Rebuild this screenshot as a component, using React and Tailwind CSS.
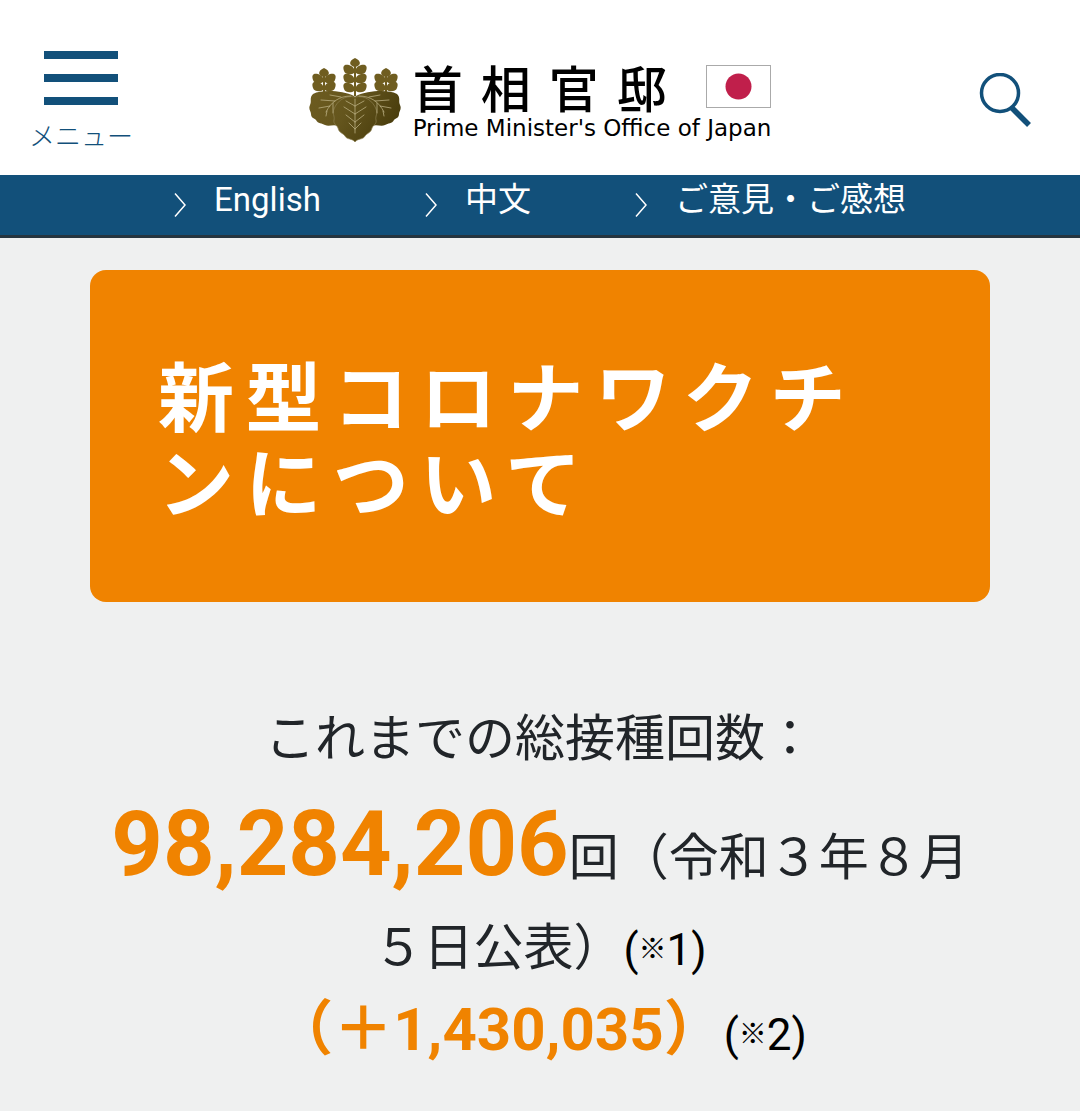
import React from "react";

const navLinks = [
  { label: "English", href: "#english" },
  { label: "中文", href: "#chinese" },
  { label: "ご意見・ご感想", href: "#opinion" },
];

// One stalk of blossoms, drawn upwards from (x, y)
const Stalk = ({ x, y, rows, step }) => (
  <g transform={`translate(${x} ${y})`}>
    {Array.from({ length: rows }, (_, i) => (
      <g key={i} transform={`translate(0 ${-i * step})`}>
        <path d="M-1 1C-3 3-10 3-11-1C-12-4-12-6-10-7C-7-8-2-6-1-3Z" />
        <path d="M1 1C3 3 10 3 11-1C12-4 12-6 10-7C7-8 2-6 1-3Z" />
      </g>
    ))}
    <path d={`M0 ${-rows * step - 5}C7 ${-rows * step - 2} 6 ${-rows * step + 3} 0 ${-rows * step + 4}C-6 ${-rows * step + 3}-7 ${-rows * step - 2} 0 ${-rows * step - 5}Z`} />
    <path d={`M0 6V${-rows * step}`} stroke="url(#gold)" strokeWidth="2" />
  </g>
);

const Emblem = () => (
  <svg viewBox="0 0 92 84" className="h-21 w-23 shrink-0" aria-hidden="true">
    <defs>
      <linearGradient id="gold" gradientUnits="userSpaceOnUse" x1="0" y1="20" x2="84" y2="74">
        <stop offset="0" stopColor="#6f5d20" />
        <stop offset="0.5" stopColor="#64551d" />
        <stop offset="1" stopColor="#473b0b" />
      </linearGradient>
    </defs>
    <g fill="url(#gold)">
      <Stalk x={46} y={32} rows={3} step={9} />
      <Stalk x={15} y={31} rows={2} step={8} />
      <Stalk x={77} y={31} rows={2} step={8} />
      <path d="M45 38C34 33 14 31 4 36C0 40 3 43 1 47C-1 51 2 53 2 56C2 60 5 60 7 62C9 66 13 65 16 67C20 69 24 66 29 68L46 40Z" />
      <path d="M47 38C58 33 78 31 88 36C92 40 89 43 91 47C93 51 90 53 90 56C90 60 87 60 85 62C83 66 79 65 76 67C72 69 68 66 63 68L46 40Z" />
      <path
        d="M46 39C36 37 28 43 25 51C23 56 26 58 25 62C24 66 28 67 29 70C30 75 34 75 36 78C38 82 43 80 46 84C49 80 54 82 56 78C58 75 62 75 63 70C64 67 68 66 67 62C66 58 69 56 67 51C64 43 56 37 46 39Z"
        stroke="#8d7f50"
        strokeWidth="0.7"
      />
    </g>
    <g fill="none" stroke="#b9ad80" strokeWidth="0.8" strokeLinecap="round">
      <path d="M46 41V75M46 48L37 43M46 48L55 43M46 56L35 49M46 56L57 49M46 64L37 57M46 64L55 57M46 71L40 65M46 71L52 65" />
      <path d="M42 38C30 38 22 44 17 54M32 39L21 37M26 43L12 42M21 48L10 50M24 45V55M18 53L17 58" />
      <path d="M50 38C62 38 70 44 75 54M60 39L71 37M66 43L80 42M71 48L82 50M68 45V55M74 53L75 58" />
    </g>
  </svg>
);

const Header = () => (
  <header className="grid grid-cols-[1fr_auto_1fr] items-center bg-white px-[29px] pt-[51px] pb-[26px] text-[#12507a]">
    <button type="button" className="flex w-fit flex-col items-center">
      <svg viewBox="0 0 74 54" className="h-[54px] w-[74px]" fill="currentColor" aria-hidden="true">
        <path d="M0 0H74V8H0ZM0 23H74V31H0ZM0 46H74V54H0Z" />
      </svg>
      <span className="mt-5 text-[26px] leading-6 font-light">メニュー</span>
    </button>

    <a href="#top" className="flex items-center gap-3 text-black">
      <Emblem />
      <span className="flex flex-col">
        <span className="flex items-center justify-between">
          <span className="flex gap-[18px] font-['Noto_Sans_CJK_JP',sans-serif] text-[50px] leading-[56px] font-medium">
            {["首", "相", "官", "邸"].map((char) => (
              <span key={char}>{char}</span>
            ))}
          </span>
          <svg viewBox="0 0 65 43" className="h-[43px] w-[65px]" aria-hidden="true">
            <rect x="0.5" y="0.5" width="64" height="42" fill="#fff" stroke="#aaa" />
            <circle cx="32.5" cy="21.5" r="13" fill="#c01f4b" />
          </svg>
        </span>
        <span className="font-['DejaVu_Sans',sans-serif] text-[23px] leading-7">
          Prime Minister's Office of Japan
        </span>
      </span>
    </a>

    <button type="button" aria-label="検索" className="justify-self-end pr-5">
      <svg viewBox="0 0 52 54" className="h-[54px] w-[52px]" fill="none" stroke="currentColor" aria-hidden="true">
        <circle cx="21" cy="20" r="18.5" strokeWidth="3.5" />
        <path d="M32 34L50 52" strokeWidth="5.5" />
      </svg>
    </button>
  </header>
);

const Nav = () => (
  <nav className="flex justify-center gap-26 border-b-3 border-[#26353f] bg-[#12507a] pb-2.5 text-white">
    {navLinks.map((link) => (
      <a key={link.href} href={link.href} className="flex items-center gap-7 text-[33px] leading-[50px]">
        <svg viewBox="0 0 12 24" className="mt-2.5 h-6 w-3" fill="none" stroke="currentColor" strokeWidth="1.5" aria-hidden="true">
          <path d="M1 0.5L11 12L1 23.5" />
        </svg>
        {link.label}
      </a>
    ))}
  </nav>
);

const Note = ({ number }) => (
  <a href={`#note${number}`} className="inline-flex items-center text-[44px] leading-[50px] text-black">
    <span>(</span>
    <span className="text-[28px] font-bold">※</span>
    <span>{`${number})`}</span>
  </a>
);

export default function App() {
  return (
    <div lang="ja" className="min-h-screen bg-[#eff0f0] font-[Roboto,'Noto_Sans_CJK_JP',sans-serif]">
      <Header />
      <Nav />
      <main className="mx-auto mt-8 w-10/12">
        <h1 className="rounded-2xl bg-[#f08300] px-17 py-20 font-['Noto_Sans_CJK_JP',sans-serif] text-[76px] leading-[86px] font-bold tracking-[0.15em] text-white">
          新型コロナワクチンについて
        </h1>
        <section className="mt-23 text-center text-[50px] leading-[90px] text-[#212529]">
          <p className="mb-4">これまでの総接種回数：</p>
          <p>
            <strong className="text-[90px] font-bold text-[#f08300]">98,284,206</strong>
            回（令和３年８月５日公表）
            <Note number={1} />
          </p>
          <p className="leading-[74px]">
            <strong className="text-[60px] font-bold text-[#f08300]">（＋1,430,035）</strong>
            <Note number={2} />
          </p>
        </section>
      </main>
    </div>
  );
}
